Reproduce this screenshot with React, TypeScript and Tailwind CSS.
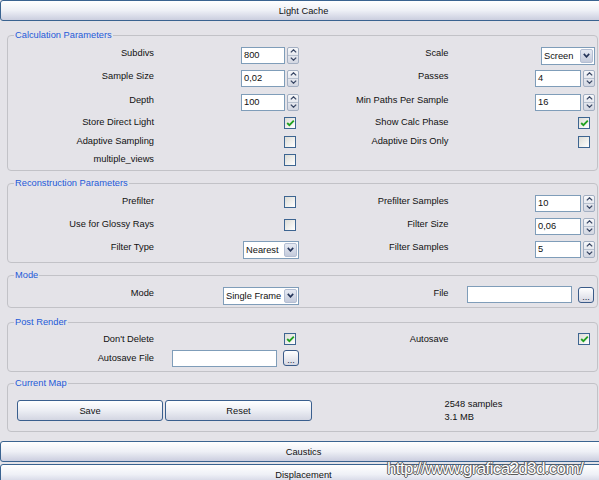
import React from "react";

const Up = () => (
  <svg width="7" height="4" viewBox="0 0 7 4">
    <path d="M0.8 3.4 L3.5 0.8 L6.2 3.4" stroke="#3a4866" strokeWidth="1.3" fill="none" />
  </svg>
);
const Down = () => (
  <svg width="7" height="4" viewBox="0 0 7 4">
    <path d="M0.8 0.6 L3.5 3.2 L6.2 0.6" stroke="#3a4866" strokeWidth="1.3" fill="none" />
  </svg>
);

const Spin = ({ v, w }: { v: string; w: string }) => (
  <div className="mt-[5px] flex items-center">
    <div className={`${w} h-[17px] border border-[#7f9db9] bg-white pl-[2px] leading-[15px]`}>{v}</div>
    <div className="ml-[2px] flex h-[17px] w-[12px] flex-col overflow-hidden rounded-[2px] border border-[#a3afc2] bg-[linear-gradient(to_bottom,#f7f8fa,#d3d7e2)]">
      <div className="flex h-1/2 items-center justify-center border-b border-[#b8c1cf]">
        <Up />
      </div>
      <div className="flex h-1/2 items-center justify-center">
        <Down />
      </div>
    </div>
  </div>
);

const Drop = ({ v, w }: { v: string; w: string }) => (
  <div className={`mt-[5px] flex h-[18px] ${w} items-stretch border border-[#7f9db9] bg-white`}>
    <div className="flex-1 overflow-hidden whitespace-nowrap pl-[2px] leading-[16px]">{v}</div>
    <div className="m-[1px] flex w-[13px] items-center justify-center rounded-[2px] border border-[#b3bed3] bg-[linear-gradient(to_bottom,#e6eaf3,#c3cadb)]">
      <svg width="7" height="5" viewBox="0 0 7 5">
        <path d="M0.8 0.9 L3.5 3.9 L6.2 0.9" stroke="#26365a" strokeWidth="1.6" fill="none" />
      </svg>
    </div>
  </div>
);

const Check = ({ on, cls }: { on?: boolean; cls: string }) => (
  <div
    className={`${cls} mt-[1px] flex h-[12px] w-[12px] items-center justify-center border border-[#3d6591] bg-[linear-gradient(135deg,#dcdcd6,#ffffff)]`}
  >
    {on && (
      <svg width="9" height="8" viewBox="0 0 9 8">
        <path d="M1.2 4 L3.4 6.2 L7.8 1.6" stroke="#21a121" strokeWidth="1.8" fill="none" />
      </svg>
    )}
  </div>
);

const Dots = ({ cls }: { cls: string }) => (
  <div
    className={`${cls} flex h-[16px] w-[16px] items-end justify-center rounded-[3px] border border-[#3a5b89] bg-[linear-gradient(to_bottom,#ffffff,#d6d8e3)] pb-[1px] leading-[8px] text-[#1a2a4a]`}
  >
    ...
  </div>
);

const Field = ({ w }: { w: string }) => (
  <div className={`${w} h-[17px] border border-[#7f9db9] bg-white`} />
);

const LeftHalf = ({ label, children }: { label?: string; children?: React.ReactNode }) => (
  <div className="flex w-1/2 items-center">
    <div className="w-[146px] shrink-0 text-right leading-[12px]">{label}</div>
    <div className="flex flex-1 items-center justify-end pr-[3.5px]">{children}</div>
  </div>
);

const RightHalf = ({ label, children }: { label?: string; children?: React.ReactNode }) => (
  <div className="flex w-1/2 items-center">
    <div className="w-[146px] shrink-0 text-right leading-[12px]">{label}</div>
    <div className="flex flex-1 items-center justify-end pr-[2px]">{children}</div>
  </div>
);

const Group = ({
  title,
  cls,
  children,
}: {
  title: string;
  cls: string;
  children: React.ReactNode;
}) => (
  <fieldset className={`${cls} ml-[7px] w-[591px] rounded-[4px] border border-[#c2c2c7]`}>
    <legend className="ml-[6px] px-[1px] leading-[12px] text-[#1e5ad8]">{title}</legend>
    {children}
  </fieldset>
);

const Bar = ({ t, cls }: { t: string; cls: string }) => (
  <div
    className={`${cls} flex h-[21px] w-[607px] items-center justify-center rounded-[3px] border border-[#3a6390] bg-[linear-gradient(to_bottom,#ffffff,#eef0f6_50%,#cbcedf)] leading-[12px]`}
  >
    {t}
  </div>
);

const Btn = ({ t, w }: { t: string; w: string }) => (
  <div
    className={`${w} flex h-[21px] shrink-0 items-center justify-center rounded-[3px] border border-[#3a5f8e] bg-[linear-gradient(to_bottom,#ffffff,#eceef4_50%,#d3d6e2)] leading-[12px]`}
  >
    {t}
  </div>
);

export default function App() {
  return (
    <div className="relative h-[480px] w-[599px] overflow-hidden bg-[#e4e3e8] font-['Liberation_Sans',Arial,sans-serif] text-[9.3px] text-[#111]">
      <Bar t="Light Cache" cls="" />

      <Group title="Calculation Parameters" cls="mt-[8px] pb-[3px]">
        <div className="flex h-[24px]">
          <LeftHalf label="Subdivs">
            <Spin v="800" w="w-[44px]" />
          </LeftHalf>
          <RightHalf label="Scale">
            <Drop v="Screen" w="w-[54px]" />
          </RightHalf>
        </div>
        <div className="flex h-[22px]">
          <LeftHalf label="Sample Size">
            <Spin v="0,02" w="w-[44px]" />
          </LeftHalf>
          <RightHalf label="Passes">
            <Spin v="4" w="w-[46px]" />
          </RightHalf>
        </div>
        <div className="flex h-[26px]">
          <LeftHalf label="Depth">
            <Spin v="100" w="w-[44px]" />
          </LeftHalf>
          <RightHalf label="Min Paths Per Sample">
            <Spin v="16" w="w-[46px]" />
          </RightHalf>
        </div>
        <div className="flex h-[18px]">
          <LeftHalf label="Store Direct Light">
            <Check on cls="mr-[3px]" />
          </LeftHalf>
          <RightHalf label="Show Calc Phase">
            <Check on cls="mr-[5px]" />
          </RightHalf>
        </div>
        <div className="flex h-[20px]">
          <LeftHalf label="Adaptive Sampling">
            <Check cls="mr-[3px]" />
          </LeftHalf>
          <RightHalf label="Adaptive Dirs Only">
            <Check cls="mr-[5px]" />
          </RightHalf>
        </div>
        <div className="flex h-[16px]">
          <LeftHalf label="multiple_views">
            <Check cls="mr-[3px]" />
          </LeftHalf>
          <RightHalf />
        </div>
      </Group>

      <Group title="Reconstruction Parameters" cls="mt-[6px] pb-[3px]">
        <div className="flex h-[24px]">
          <LeftHalf label="Prefilter">
            <Check cls="mr-[3px]" />
          </LeftHalf>
          <RightHalf label="Prefilter Samples">
            <Spin v="10" w="w-[46px]" />
          </RightHalf>
        </div>
        <div className="flex h-[22px]">
          <LeftHalf label="Use for Glossy Rays">
            <Check cls="mr-[3px]" />
          </LeftHalf>
          <RightHalf label="Filter Size">
            <Spin v="0,06" w="w-[46px]" />
          </RightHalf>
        </div>
        <div className="flex h-[24px]">
          <LeftHalf label="Filter Type">
            <Drop v="Nearest" w="w-[56px]" />
          </LeftHalf>
          <RightHalf label="Filter Samples">
            <Spin v="5" w="w-[46px]" />
          </RightHalf>
        </div>
      </Group>

      <Group title="Mode" cls="mt-[6px] pb-[2px]">
        <div className="flex h-[24px]">
          <LeftHalf label="Mode">
            <Drop v="Single Frame" w="w-[76px]" />
          </LeftHalf>
          <RightHalf label="File">
            <div className="mt-[3px] flex items-center">
              <Field w="w-[105px]" />
              <Dots cls="ml-[6px] mr-[1px]" />
            </div>
          </RightHalf>
        </div>
      </Group>

      <Group title="Post Render" cls="mt-[8px] pb-[5px]">
        <div className="flex h-[21px]">
          <LeftHalf label="Don't Delete">
            <Check on cls="mr-[3px]" />
          </LeftHalf>
          <RightHalf label="Autosave">
            <Check on cls="mr-[5px]" />
          </RightHalf>
        </div>
        <div className="flex h-[17px]">
          <LeftHalf label="Autosave File">
            <div className="mt-[1px] flex items-center">
              <Field w="w-[105px]" />
              <Dots cls="ml-[6px]" />
            </div>
          </LeftHalf>
          <RightHalf />
        </div>
      </Group>

      <Group title="Current Map" cls="mt-[5px] pb-[10px] pt-[11px]">
        <div className="flex h-[21px] items-center">
          <div className="flex w-1/2 shrink-0 items-center gap-[2px] pl-[9px]">
            <Btn t="Save" w="w-[146px]" />
            <Btn t="Reset" w="w-[147px]" />
          </div>
          <div className="w-1/2 shrink-0 pl-[142px] leading-[12.5px]">
            <div>2548 samples</div>
            <div>3.1 MB</div>
          </div>
        </div>
      </Group>

      <Bar t="Caustics" cls="mt-[9px] h-[20px]" />
      <Bar t="Displacement" cls="mt-[2px]" />

      <div className="absolute left-[387px] top-[460px] whitespace-nowrap text-[17px] leading-[17px] tracking-[-0.65px] text-white [text-shadow:1px_0_#5a5a5a,-1px_0_#5a5a5a,0_1px_#5a5a5a,0_-1px_#5a5a5a]">
        http://www.grafica2d3d.com/
      </div>
    </div>
  );
}
